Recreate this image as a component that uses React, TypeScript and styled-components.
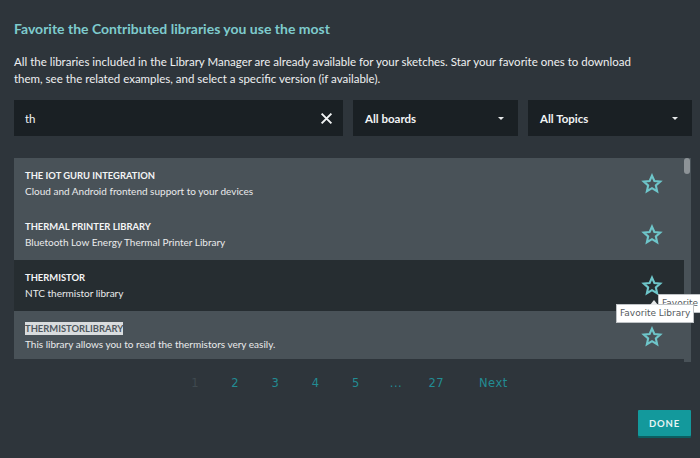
import React from 'react'
import styled, { createGlobalStyle } from 'styled-components'

const GlobalStyle = createGlobalStyle`
    html, body {
        margin: 0;
        padding: 0;
        background: #2e353b;
    }
    body {
        font-family: Lato, "Open Sans", sans-serif;
        color: #e6e9ea;
    }
`

interface Library {
    name: string
    description: string
    selected?: boolean
}

const libraries: Library[] = [
    { name: 'THE IOT GURU INTEGRATION', description: 'Cloud and Android frontend support to your devices' },
    { name: 'THERMAL PRINTER LIBRARY', description: 'Bluetooth Low Energy Thermal Printer Library' },
    { name: 'THERMISTOR', description: 'NTC thermistor library' },
    { name: 'THERMISTORLIBRARY', description: 'This library allows you to read the thermistors very easily.', selected: true },
]

const pages = ['1', '2', '3', '4', '5', '...', '27', 'Next']

const Page = styled.div`
    width: 700px;
    height: 458px;
    box-sizing: border-box;
    padding: 20px 9px 0 14px;
    display: flex;
    flex-direction: column;
    background: #2e353b;
    overflow: hidden;
`

const Title = styled.h1`
    margin: 0;
    font-size: 14px;
    font-weight: 700;
    line-height: 17px;
    color: #7ecbcd;
`

const Intro = styled.p`
    margin: 16px 0 0;
    font-size: 11.5px;
    line-height: 17px;
    color: #eef0f1;
`

const Filters = styled.div`
    margin-top: 13px;
    display: grid;
    grid-template-columns: 329px 165px 164px;
    gap: 10px;
    height: 36px;
`

const Field = styled.div`
    background: #1a2024;
    display: flex;
    align-items: center;
    justify-content: space-between;
    padding: 0 10px 0 11px;
    font-size: 11.5px;
    color: #f2f4f5;
`

const SelectField = styled(Field)`
    font-weight: 700;
    padding: 0 14px 0 12px;
`

const Caret = styled.span`
    width: 0;
    height: 0;
    border-left: 3px solid transparent;
    border-right: 3px solid transparent;
    border-top: 3px solid #e8eaeb;
`

const List = styled.div`
    position: relative;
    margin-top: 22px;
    height: 201px;
    display: grid;
    grid-template-columns: 1fr 7px;
    background: #495258;
`

const Rows = styled.div`
    display: flex;
    flex-direction: column;
`

const Row = styled.div<{ $hover?: boolean }>`
    height: 51px;
    box-sizing: border-box;
    display: flex;
    align-items: center;
    justify-content: space-between;
    padding: 9px 21px 9px 11px;
    background: ${p => (p.$hover ? '#262d31' : 'transparent')};
`

const RowText = styled.div`
    display: flex;
    flex-direction: column;
    gap: 2px;
`

const RowName = styled.span<{ $selected?: boolean }>`
    align-self: flex-start;
    font-size: 9.4px;
    font-weight: 700;
    line-height: 13px;
    color: ${p => (p.$selected ? '#4e575d' : '#f4f5f6')};
    background: ${p => (p.$selected ? '#d9dcde' : 'transparent')};
`

const RowDesc = styled.span`
    font-size: 10px;
    line-height: 14px;
    color: #e9ebec;
`

const Scrollbar = styled.div`
    background: #495258;
`

const Thumb = styled.div`
    width: 6px;
    height: 16px;
    border-radius: 3px;
    background: #8d9397;
`

const Tooltip = styled.div`
    position: absolute;
    background: #ffffff;
    border: 1px solid #bfc3c6;
    color: #555a5e;
    font-family: "DejaVu Sans", "Liberation Sans", sans-serif;
    font-size: 9px;
    line-height: 17px;
    padding: 0 3px;
    white-space: nowrap;
    z-index: 2;
`

const Arrow = styled.span`
    position: absolute;
    left: 33px;
    top: -5px;
    width: 0;
    height: 0;
    border-left: 4px solid transparent;
    border-right: 4px solid transparent;
    border-bottom: 5px solid #e6e8e9;
`

const Pagination = styled.nav`
    margin-top: 14px;
    display: flex;
    padding-left: 161px;
    height: 20px;
    align-items: center;
    font-family: "DejaVu Sans", "Liberation Sans", sans-serif;
    font-size: 11.5px;
`

const PageLink = styled.span<{ $current?: boolean; $wide?: boolean }>`
    width: ${p => (p.$wide ? '74px' : '40.2px')};
    text-align: center;
    letter-spacing: 0.5px;
    color: ${p => (p.$current ? '#3f494f' : '#228c93')};
`

const Footer = styled.div`
    margin-top: 17px;
    display: flex;
    justify-content: flex-end;
`

const DoneButton = styled.button`
    width: 53px;
    height: 26px;
    border: none;
    border-radius: 1px;
    background: #13999c;
    box-shadow: 0 2px 0 #0b5f61;
    color: #e8f4f4;
    font-family: Lato, "Open Sans", sans-serif;
    font-size: 9.5px;
    font-weight: 700;
    letter-spacing: 0.8px;
    padding: 0;
`

const Star = () => (
    <svg width="22" height="22" viewBox="0 0 24 24" fill="none">
        <path
            d="M12 2.8l2.6 5.9 6.4.6-4.8 4.3 1.4 6.3L12 16.6l-5.6 3.3 1.4-6.3L3 9.3l6.4-.6z"
            stroke="#6ec6ca"
            strokeWidth="2.3"
            strokeLinejoin="miter"
        />
    </svg>
)

const Clear = () => (
    <svg width="13" height="13" viewBox="0 0 12 12">
        <path d="M1.5 1.5l9 9M10.5 1.5l-9 9" stroke="#f2f4f5" strokeWidth="1.8" />
    </svg>
)

const App = () => {
    return (
        <>
            <GlobalStyle />
            <Page>
                <Title>Favorite the Contributed libraries you use the most</Title>
                <Intro>
                    All the libraries included in the Library Manager are already available for your sketches. Star your favorite ones to download
                    <br />
                    them, see the related examples, and select a specific version (if available).
                </Intro>
                <Filters>
                    <Field>
                        <span>th</span>
                        <Clear />
                    </Field>
                    <SelectField>
                        <span>All boards</span>
                        <Caret />
                    </SelectField>
                    <SelectField>
                        <span>All Topics</span>
                        <Caret />
                    </SelectField>
                </Filters>
                <List>
                    <Rows>
                        {libraries.map((lib, i) => (
                            <Row key={lib.name} $hover={i === 2}>
                                <RowText>
                                    <RowName $selected={lib.selected}>{lib.name}</RowName>
                                    <RowDesc>{lib.description}</RowDesc>
                                </RowText>
                                <Star />
                            </Row>
                        ))}
                    </Rows>
                    <Scrollbar>
                        <Thumb />
                    </Scrollbar>
                    <Tooltip style={{ left: 644, top: 136 }}>Favorite</Tooltip>
                    <Tooltip style={{ left: 602, top: 146 }}>
                        <Arrow />
                        Favorite Library
                    </Tooltip>
                </List>
                <Pagination>
                    {pages.map((p, i) => (
                        <PageLink key={p} $current={i === 0} $wide={p === 'Next'}>{p}</PageLink>
                    ))}
                </Pagination>
                <Footer>
                    <DoneButton>DONE</DoneButton>
                </Footer>
            </Page>
        </>
    )
}

export default App
